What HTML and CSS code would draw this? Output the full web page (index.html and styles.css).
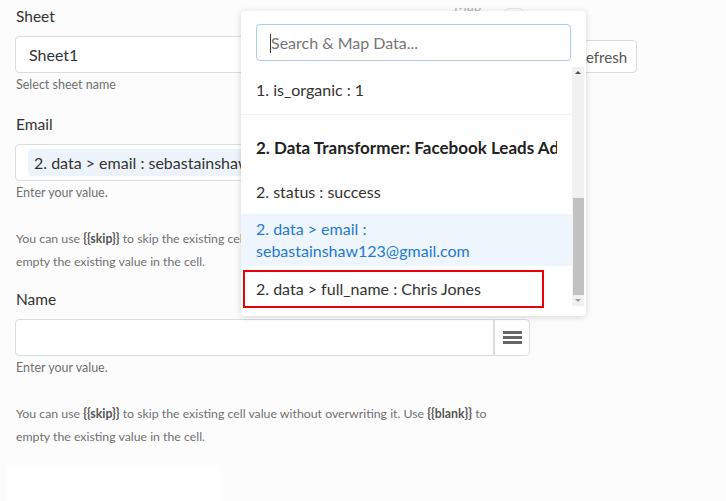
FILE: index.html
```html
<!DOCTYPE html>
<html lang="en">
<head>
  <meta charset="UTF-8">
  <meta name="viewport" content="width=device-width, initial-scale=1.0">
  <title>Map Data</title>
  <link rel="stylesheet" href="styles.css">
</head>
<body>
  <div class="top-bar">
    <div class="top-inner">
      <span class="top-label">Map</span>
      <span class="toggle"></span>
    </div>
  </div>

  <div class="form">
    <div class="field">
      <label class="field-label">Sheet</label>
      <div class="sheet-row">
        <div class="input sheet-select">Sheet1</div>
        <button class="btn-refresh">Refresh</button>
      </div>
      <p class="hint">Select sheet name</p>
    </div>

    <div class="field">
      <label class="field-label">Email</label>
      <div class="map-row">
        <div class="input map-input">
          <span class="chip">2. data &gt; email : sebastainshaw123@gmail.com</span>
        </div>
        <button class="btn-menu"><span></span><span></span><span></span></button>
      </div>
      <p class="hint">Enter your value.</p>
      <p class="help">You can use <b>{{skip}}</b> to skip the existing cell value without overwriting it. Use <b>{{blank}}</b> to empty the existing value in the cell.</p>
    </div>

    <div class="field">
      <label class="field-label">Name</label>
      <div class="map-row">
        <div class="input map-input"></div>
        <button class="btn-menu"><span></span><span></span><span></span></button>
      </div>
      <p class="hint">Enter your value.</p>
      <p class="help">You can use <b>{{skip}}</b> to skip the existing cell value without overwriting it. Use <b>{{blank}}</b> to empty the existing value in the cell.</p>
    </div>

    <div class="blank-card"></div>
  </div>

  <!-- map data dropdown -->
  <div class="dropdown">
    <div class="search-wrap">
      <div class="search"><span class="caret"></span>Search &amp; Map Data...</div>
    </div>
    <div class="list-wrap">
      <ul class="list">
        <li class="item">1. is_organic : 1</li>
        <li class="group"><span>2. Data Transformer: Facebook Leads Ads</span></li>
        <li class="item">2. status : success</li>
        <li class="item active">2. data &gt; email :<br>sebastainshaw123@gmail.com</li>
        <li class="item">2. data &gt; full_name : Chris Jones</li>
      </ul>
      <div class="scrollbar">
        <span class="arrow up"></span>
        <div class="thumb"></div>
        <span class="arrow down"></span>
      </div>
    </div>
    <div class="highlight"></div>
  </div>
</body>
</html>
```

FILE: styles.css
```css
body {
  margin: 0;
  font-family: Lato, "Open Sans", sans-serif;
  background-color: #fcfcfd;
  color: #333;
  position: relative;
  height: 501px;
  overflow: hidden;
}

/* header row is scrolled away, only its bottom edge peeks out */
.top-bar {
  position: absolute;
  top: 8px;
  left: 454px;
  height: 4px;
  overflow: hidden;
  opacity: 0.5;
}
.top-inner {
  margin-top: -11px;
  display: flex;
  align-items: flex-start;
  gap: 20px;
  font-size: 14px;
  line-height: 17px;
  color: #666;
}
.toggle {
  width: 22px;
  height: 14px;
  border: 1px solid #d0d0d0;
  border-radius: 8px;
  margin-top: 11px;
}

.form {
  padding: 7px 0 0 15px;
}
.field-label {
  display: block;
  font-size: 15.5px;
  line-height: 18px;
  margin-left: 1px;
  margin-bottom: 11px;
  color: #333;
}
.input {
  box-sizing: border-box;
  height: 37px;
  border: 1px solid #d9dce1;
  border-radius: 4px;
  background: #fff;
}
.sheet-row {
  display: flex;
  gap: 10px;
  width: 622px;
}
.sheet-select {
  flex: 1;
  padding: 0 13px;
  font-size: 16px;
  line-height: 35px;
}
.btn-refresh {
  margin-top: 4px;
  height: 33px;
  padding: 0 9px;
  font-family: inherit;
  font-size: 15px;
  color: #555;
  background: #fff;
  border: 1px solid #d9dce1;
  border-radius: 4px;
}
.map-row {
  display: flex;
  width: 515px;
}
.map-input {
  flex: 1;
  padding: 4px 12px;
  border-radius: 4px 0 0 4px;
  overflow: hidden;
}
.chip {
  display: inline-block;
  padding: 0 6px;
  height: 27px;
  line-height: 27px;
  font-size: 16px;
  background: #edf3fb;
  border-radius: 4px;
  white-space: nowrap;
  color: #333;
}
.btn-menu {
  width: 36px;
  height: 37px;
  box-sizing: border-box;
  background: #fff;
  border: 1px solid #d9dce1;
  border-radius: 0 4px 4px 0;
  display: flex;
  flex-direction: column;
  justify-content: center;
  align-items: center;
  gap: 2px;
  padding: 0;
}
.btn-menu span {
  display: block;
  width: 19px;
  height: 3px;
  background: #666;
}
.hint {
  margin: 5px 0 0 1px;
  font-size: 12.5px;
  line-height: 14px;
  color: #707070;
}
.help {
  margin: 27px 0 0 1px;
  width: 480px;
  font-size: 12.3px;
  line-height: 23px;
  color: #707070;
}
.help b {
  color: #555;
}
.field {
  margin-bottom: 17px;
}
.field:first-child {
  margin-bottom: 23px;
}
.blank-card {
  margin: 8px 0 0 -8px;
  width: 213px;
  height: 40px;
  background: #fff;
}

.dropdown {
  position: absolute;
  top: 11px;
  left: 241px;
  width: 345px;
  height: 305px;
  background: #fff;
  border-radius: 4px;
  box-shadow: 0 1px 6px rgba(0, 0, 0, 0.16);
  display: flex;
  flex-direction: column;
}
.search-wrap {
  padding: 13px 15px 6px 15px;
}
.search {
  box-sizing: border-box;
  height: 37px;
  border: 1px solid #a9cdec;
  border-radius: 4px;
  padding: 0 13px;
  font-size: 16px;
  line-height: 35px;
  color: #777;
}
.caret {
  display: inline-block;
  width: 1px;
  height: 19px;
  background: #333;
  vertical-align: -4px;
}
.list-wrap {
  flex: 1;
  display: flex;
  min-height: 0;
}
.list {
  flex: 1;
  list-style: none;
  margin: 0;
  padding: 0;
  overflow: hidden;
}
.item {
  padding: 13px 15px;
  font-size: 16px;
  line-height: 19px;
  color: #333;
}
.list .item:first-child {
  padding-bottom: 15px;
  border-bottom: 1px solid #f2f2f2;
}
.group {
  padding: 23px 0 11px 15px;
  margin-right: 15px;
  font-size: 17px;
  font-weight: bold;
  line-height: 20px;
  white-space: nowrap;
  overflow: hidden;
  color: #222;
}
.item.active {
  background: #eef5fd;
  color: #1f7ad0;
  line-height: 22px;
  padding: 4px 15px;
}
.scrollbar {
  width: 12px;
  margin: 0 2px 10px 0;
  background: #f1f1f1;
  display: flex;
  flex-direction: column;
  align-items: center;
}
.thumb {
  margin-top: auto;
  width: 11px;
  height: 97px;
  background: #c1c1c1;
}
.arrow {
  width: 0;
  height: 0;
  border-left: 3px solid transparent;
  border-right: 3px solid transparent;
}
.arrow.up {
  margin-top: 4px;
  border-bottom: 3px solid #505050;
}
.arrow.down {
  margin: 4px 0;
  border-top: 3px solid #a0a0a0;
}
.highlight {
  position: absolute;
  left: 2px;
  top: 259px;
  width: 297px;
  height: 34px;
  border: 2px solid #e8000b;
}
```
